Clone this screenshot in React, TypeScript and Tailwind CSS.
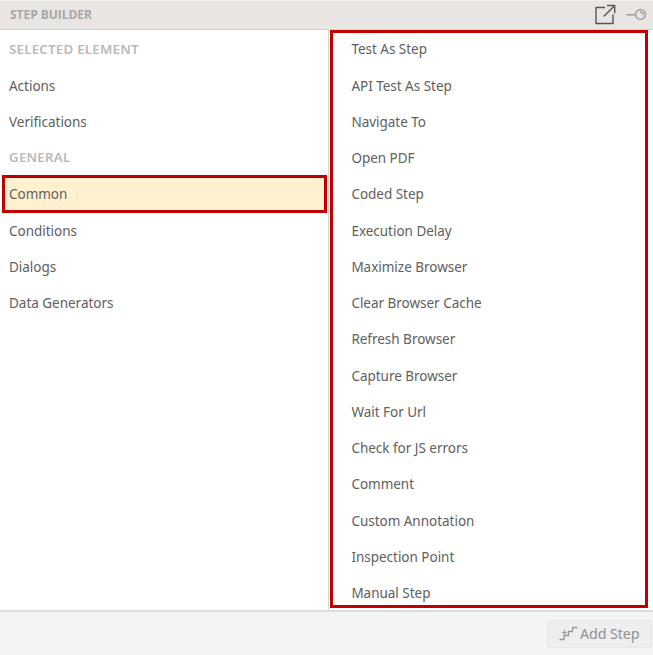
const categories = [
  { label: 'SELECTED ELEMENT', heading: true },
  { label: 'Actions' },
  { label: 'Verifications' },
  { label: 'GENERAL', heading: true },
  { label: 'Common', selected: true },
  { label: 'Conditions' },
  { label: 'Dialogs' },
  { label: 'Data Generators' },
];

const steps = [
  'Test As Step', 'API Test As Step', 'Navigate To', 'Open PDF', 'Coded Step',
  'Execution Delay', 'Maximize Browser', 'Clear Browser Cache', 'Refresh Browser',
  'Capture Browser', 'Wait For Url', 'Check for JS errors', 'Comment',
  'Custom Annotation', 'Inspection Point', 'Manual Step',
];

function PopOutIcon() {
  return (
    <svg width="22" height="22" viewBox="0 0 22 22" fill="none" stroke="#555" strokeWidth="1.4" strokeLinejoin="round">
      <path d="M11 3.500H2V19.500h17v-9" />
      <path d="M9.700 12.500 20.500 1.700M13 1.500h7.700v7.700" />
    </svg>
  );
}

function PinIcon() {
  return (
    <svg width="22" height="14" viewBox="0 0 22 14" fill="none" stroke="#a2a2a2">
      <path d="M0.500 6.800H10" strokeWidth="1.600" />
      <circle cx="14.500" cy="6.500" r="4.900" strokeWidth="1.500" />
      <path d="M14 4.200a2.300 2.300 0 0 1 2.800 2.800" strokeWidth="1.500" />
    </svg>
  );
}

function StairsIcon() {
  return (
    <svg width="20" height="16" viewBox="0 0 20 16" fill="none" stroke="#989898">
      <path d="M0.500 13.500H5v-4h4.500V5.500H13.500V1.500h5" strokeWidth="1.300" />
      <path d="M3 6.500h5M5.500 4v5" strokeWidth="1.200" />
    </svg>
  );
}

export default function App() {
  return (
    <div className="flex h-[655px] w-[653px] flex-col overflow-hidden bg-white font-['Noto_Sans','Open_Sans',sans-serif] text-[13.5px] tracking-[-0.02px] text-[#606060]">
      <header className="flex h-[30px] shrink-0 items-center border-t border-b border-t-[#f2efed] border-b-[#d5d4d2] bg-[#e9e5e2] pl-[10px]">
        <h1 className="flex-1 font-['Open_Sans','Noto_Sans',sans-serif] text-[12px] font-bold tracking-[-0.04px] text-[#a8a8a8]">STEP BUILDER</h1>
        <button className="mr-[10px]" aria-label="Open in window"><PopOutIcon /></button>
        <button className="mr-[5px]" aria-label="Pin"><PinIcon /></button>
      </header>
      <main className="flex h-[580px] shrink-0">
        <nav className="w-[329px] border-r border-[#d6d6d6] pt-[1px]">
          {categories.map(({ label, heading, selected }) => (
            <div key={label} className={`relative flex h-[36.24px] items-center pl-[9px] ${heading ? 'text-[13.3px] font-semibold tracking-[0.23px] text-[#b9b9b9]' : ''}`}>
              {selected && <div className="absolute -top-px left-[2px] h-[38px] w-[325px] border-3 border-[#c00000] bg-[#fff0cf]" />}
              <span className="relative pt-px">{label}</span>
            </div>
          ))}
        </nav>
        <ul className="ml-px h-[578px] w-[318px] border-3 border-[#c00000] pl-[18.4px]">
          {steps.map((step, i) => (
            <li key={step} className={`flex h-[36.24px] items-center pt-px ${i === 0 ? '-mt-[2px]' : ''}`}>{step}</li>
          ))}
        </ul>
      </main>
      <footer className="flex h-[45px] shrink-0 justify-end border-t-2 border-[#dcdedd] bg-[#f4f4f4] pt-[8px] pr-[1px]">
        <button className="flex h-[28px] w-[105px] items-center rounded-[3px] border border-[#e7e7e7] bg-[#eeeeee] pb-px pl-[11px] text-[14.3px] tracking-[-0.1px] text-[#929292]">
          <StairsIcon />
          <span className="ml-px">Add Step</span>
        </button>
      </footer>
    </div>
  );
}
